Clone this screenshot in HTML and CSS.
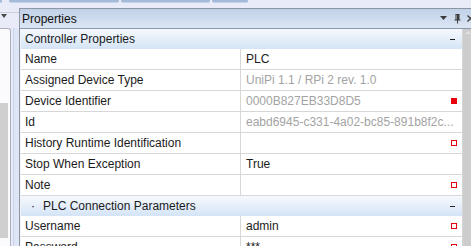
FILE: index.html
```html
<!DOCTYPE html>
<html>
<head>
<meta charset="utf-8">
<link rel="stylesheet" href="styles.css">
</head>
<body>
<div class="tabs">
  <div class="tab tab-a"></div>
  <div class="tab tab-b"></div>
  <div class="tab tab-c"></div>
  <div class="tab tab-d"></div>
</div>
<div class="main">
  <div class="side">
    <div class="side-head"><span class="side-arrow"></span></div>
    <div class="side-body">
      <div class="side-box">
        <div class="side-scroll"></div>
      </div>
      <div class="side-strip"></div>
    </div>
  </div>
  <div class="panel">
    <div class="panel-head">
      <span class="panel-title">Properties</span>
      <span class="head-icons">
        <svg width="8" height="5" viewBox="0 0 8 5"><path d="M0 0H7L3.5 4Z" fill="#3b3b3b"/></svg>
        <svg width="7" height="10" viewBox="0 0 7 10"><path d="M1.5 0.5H5.5M2 0.5V6M5 0.5V6M0.5 6H6.5M3.5 6V9.5" stroke="#3b3b3b" stroke-width="1" fill="none"/><rect x="3" y="1" width="2" height="5" fill="#3b3b3b"/></svg>
        <svg width="7" height="7" viewBox="0 0 7 7"><path d="M0.5 0.5L6.5 6.5M6.5 0.5L0.5 6.5" stroke="#3b3b3b" stroke-width="1.3"/></svg>
      </span>
    </div>
    <div class="panel-body">
      <div class="grid">
        <div class="cat"><span class="cat-name">Controller Properties</span><span class="cat-toggle"></span></div>
        <div class="row"><div class="lbl">Name</div><div class="val">PLC</div></div>
        <div class="row"><div class="lbl">Assigned Device Type</div><div class="val dim">UniPi 1.1 / RPi 2 rev. 1.0</div></div>
        <div class="row"><div class="lbl">Device Identifier</div><div class="val dim">0000B827EB33D8D5<span class="mark fill"></span></div></div>
        <div class="row"><div class="lbl">Id</div><div class="val dim">eabd6945-c331-4a02-bc85-891b8f2c...</div></div>
        <div class="row"><div class="lbl">History Runtime Identification</div><div class="val"><span class="mark"></span></div></div>
        <div class="row"><div class="lbl">Stop When Exception</div><div class="val">True</div></div>
        <div class="row"><div class="lbl">Note</div><div class="val"><span class="mark"></span></div></div>
        <div class="cat"><span class="cat-name sub"><span class="dot">·</span>PLC Connection Parameters</span><span class="cat-toggle"></span></div>
        <div class="row"><div class="lbl">Username</div><div class="val">admin<span class="mark"></span></div></div>
        <div class="row"><div class="lbl">Password</div><div class="val">***<span class="mark"></span></div></div>
      </div>
      <div class="scrollbar"><span class="up"></span></div>
    </div>
  </div>
</div>
</body>
</html>
```
FILE: styles.css
```css
html, body {
  margin: 0;
  padding: 0;
  height: 100%;
  overflow: hidden;
}
body {
  background: #e9ecf8;
  font-family: "Segoe UI", "Liberation Sans", Arial, sans-serif;
  font-size: 12px;
  color: #1b1b1b;
}
.tabs {
  display: flex;
  height: 3px;
  gap: 2px;
  align-items: flex-start;
}
.tab {
  height: 3px;
  background: #a4bad8;
  border-radius: 0 0 2px 2px;
  border-bottom: 1px solid #c3d2e8;
  box-sizing: border-box;
}
.tab-a { width: 2px; margin-right: 5px; }
.tab-b { width: 110px; }
.tab-c { width: 89px; }
.tab-d { width: 36px; }
.main {
  display: flex;
  margin-top: 5px;
  height: 238px;
}
.side {
  width: 19px;
  flex-shrink: 0;
  display: flex;
  flex-direction: column;
}
.side-head {
  height: 16px;
  flex-shrink: 0;
  position: relative;
  border-top: 1px solid #c9cfdb;
  margin-top: 4px;
  box-sizing: border-box;
}
.side-arrow {
  position: absolute;
  left: 1px;
  top: 1px;
  width: 0;
  height: 0;
  border-left: 3.5px solid transparent;
  border-right: 3.5px solid transparent;
  border-top: 4px solid #4a4a4a;
}
.side-body {
  flex: 1;
  display: flex;
}
.side-box {
  width: 11px;
  border: 1px solid #a9afbc;
  border-left: none;
  border-bottom: none;
  border-radius: 0 3px 0 0;
  background: #fbfbfd;
  display: flex;
  flex-direction: column;
  justify-content: flex-end;
}
.side-scroll {
  width: 8px;
  height: 135px;
  margin-bottom: 8px;
  background: #cfcfcf;
}
.side-strip {
  width: 5px;
  margin-left: 2px;
  background: #dde5f6;
  border-left: 1px solid #c8d3ea;
}
.panel {
  flex: 1;
  min-height: 0;
  overflow: hidden;
  display: flex;
  flex-direction: column;
  border-left: 1px solid #8f96a3;
  border-top: 1px solid #8f96a3;
}
.panel-head {
  height: 19px;
  flex-shrink: 0;
  display: flex;
  align-items: center;
  justify-content: space-between;
  padding-left: 2px;
  background: linear-gradient(#c1d1e8, #dce6f4);
  border-bottom: 1px solid #8b98ad;
}
.panel-title {
  color: #111;
}
.head-icons {
  display: flex;
  align-items: center;
  gap: 6px;
  margin-right: -3px;
}
.panel-body {
  flex: 1 0 auto;
  display: flex;
}
.grid {
  width: 441px;
  border-right: 1px solid #d5d5d5;
  background: #fff;
  border-left: 1px solid #f4f4f4;
}
.cat {
  height: 20px;
  display: flex;
  align-items: center;
  justify-content: space-between;
  background: linear-gradient(#f6f9fd, #d4e4f6);
  padding-left: 4px;
}
.cat-name.sub {
  padding-left: 6px;
}
.dot {
  margin-right: 8px;
}
.cat-toggle {
  width: 5px;
  height: 1px;
  background: #222;
  margin-right: 7px;
}
.row {
  height: 20px;
  display: flex;
  border-bottom: 1px solid #d7d7d7;
}
.lbl {
  width: 215px;
  padding-left: 4px;
  border-right: 1px solid #d7d7d7;
  line-height: 20px;
  white-space: nowrap;
}
.val {
  flex: 1;
  padding-left: 5px;
  line-height: 20px;
  display: flex;
  align-items: center;
  white-space: nowrap;
  position: relative;
}
.dim {
  color: #a3a3a3;
}
.mark {
  position: absolute;
  right: 5px;
  top: 7px;
  width: 6px;
  height: 6px;
  box-sizing: border-box;
  border: 1.5px solid #e8000b;
}
.mark.fill {
  background: #e8000b;
}
.scrollbar {
  flex: 1;
  background: #cdcdcd;
  position: relative;
}
.up {
  position: absolute;
  left: 2px;
  top: 2px;
  width: 0;
  height: 0;
  border-left: 3px solid transparent;
  border-right: 3px solid transparent;
  border-bottom: 3px solid #e0e0e0;
}
```
